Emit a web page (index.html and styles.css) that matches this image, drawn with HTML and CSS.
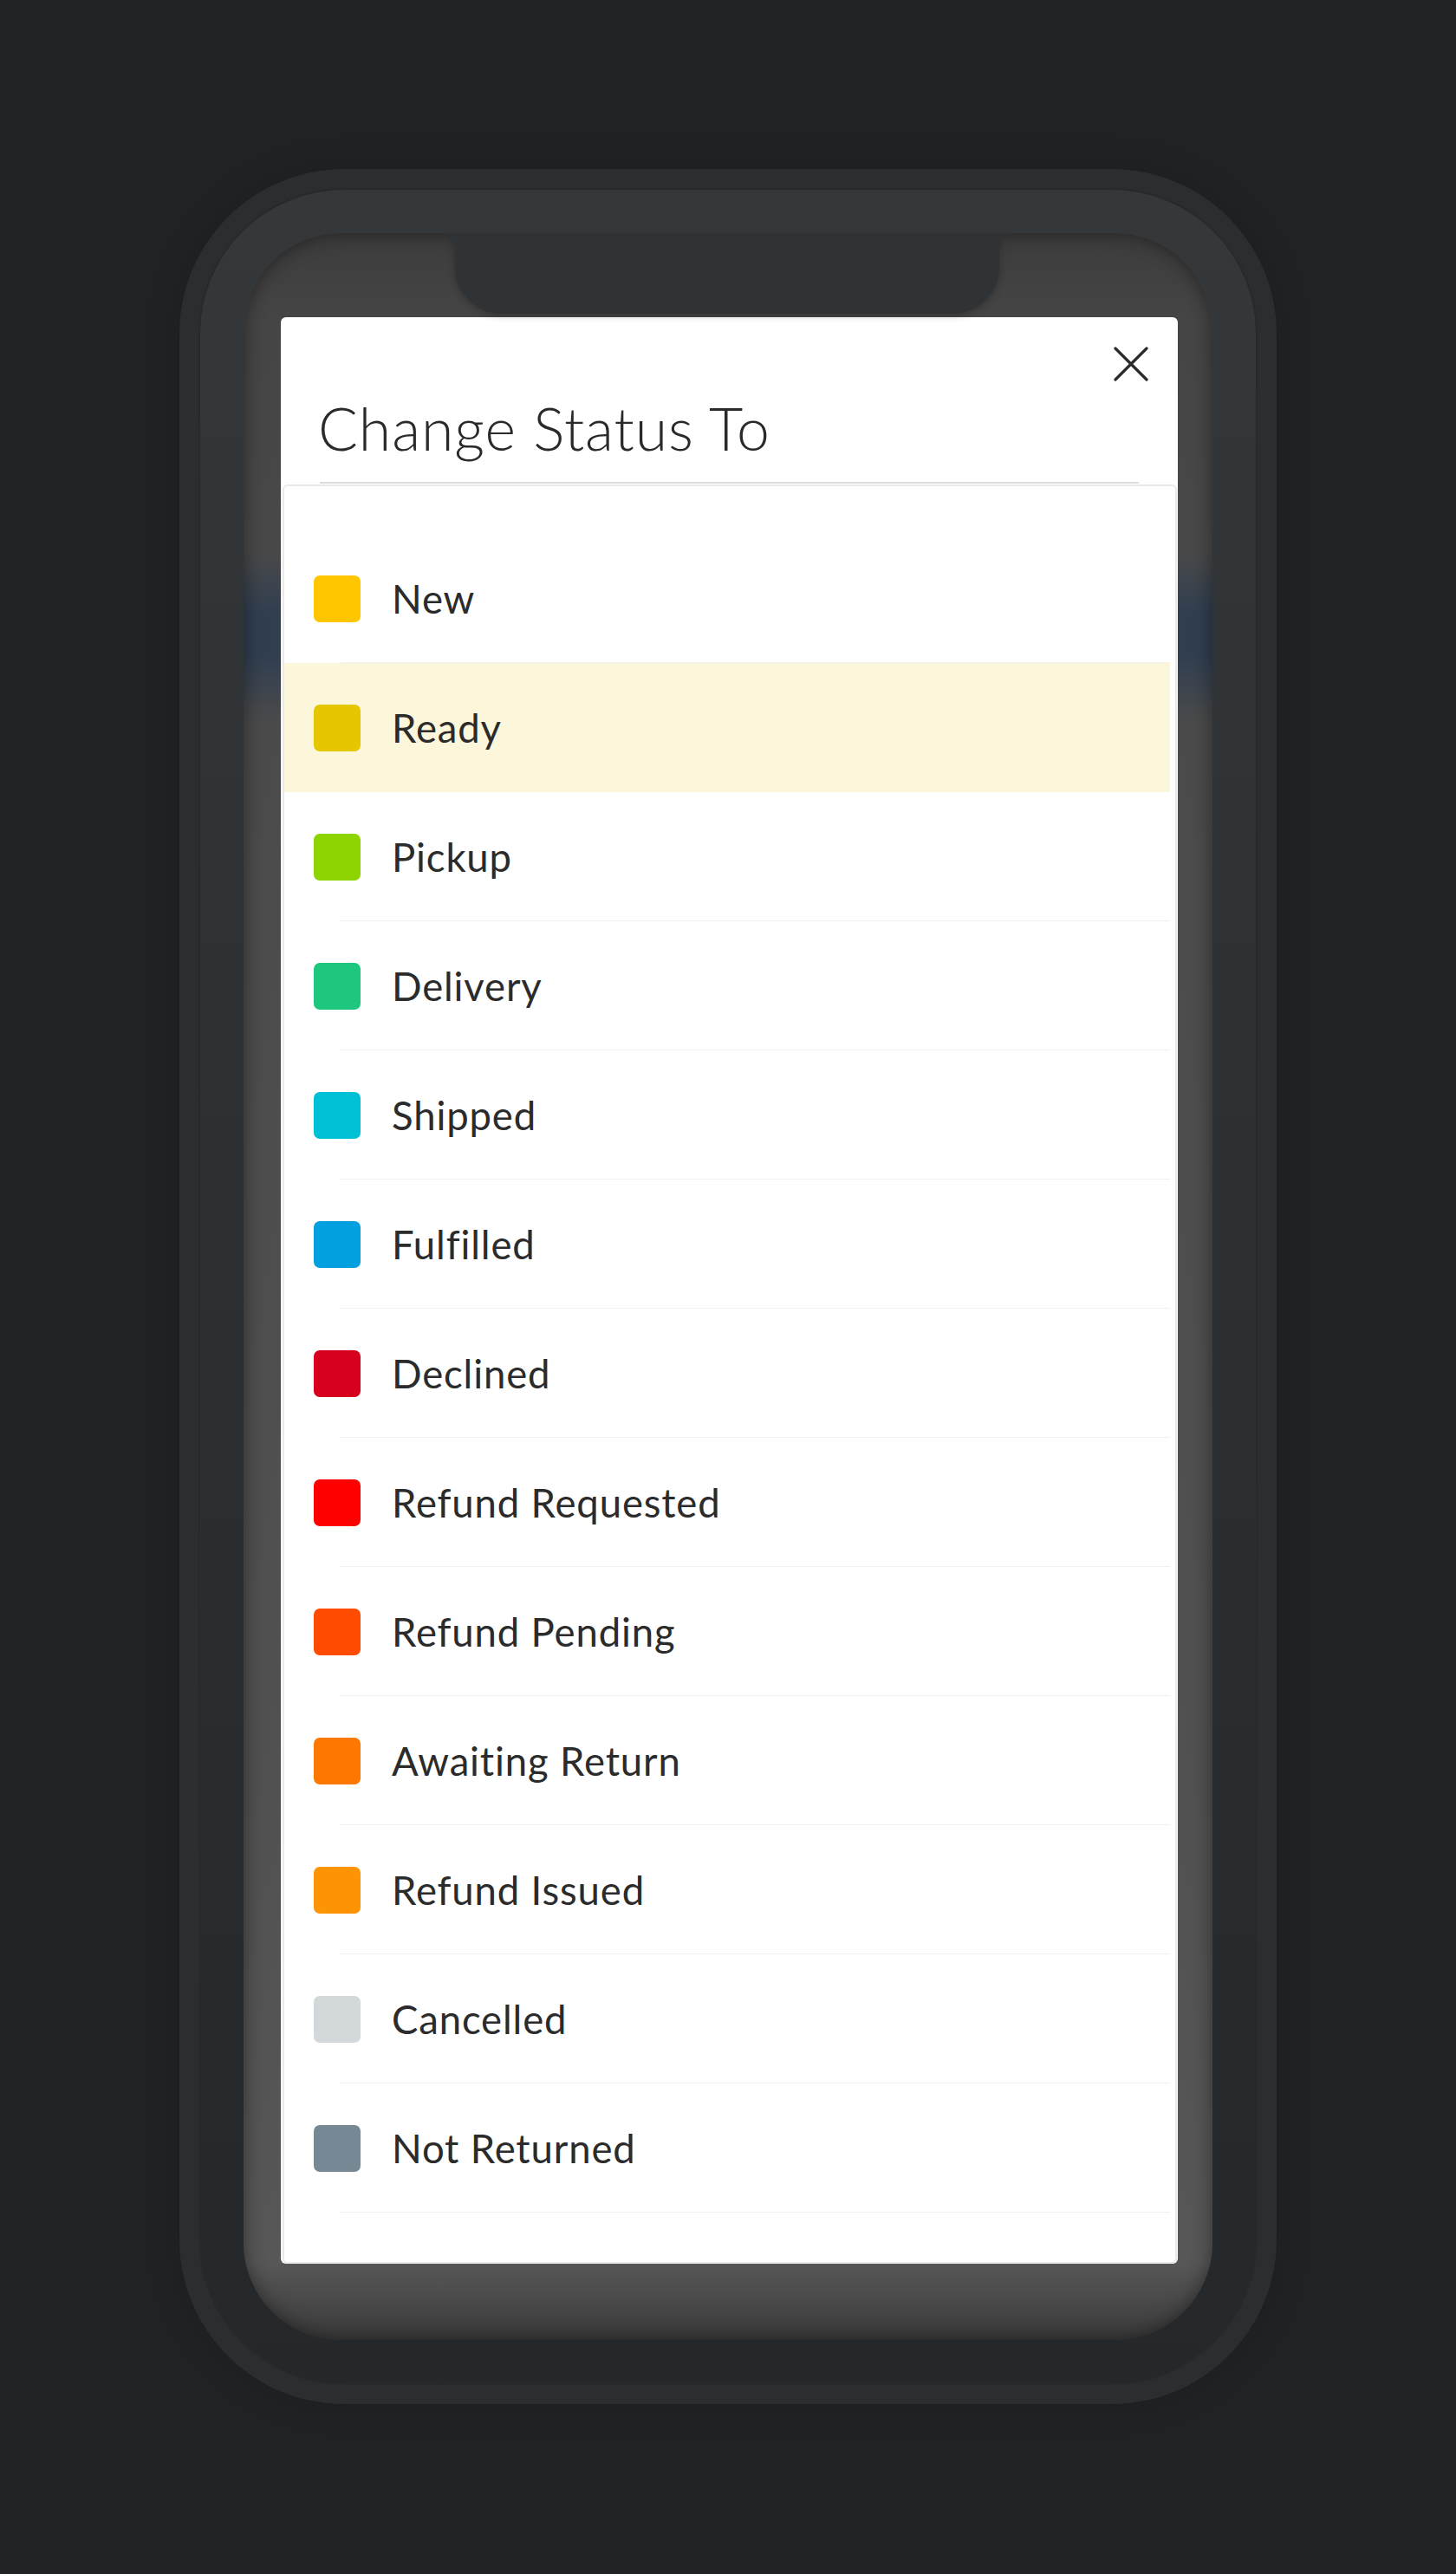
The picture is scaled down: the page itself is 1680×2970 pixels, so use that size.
FILE: index.html
```html
<!DOCTYPE html>
<html lang="en">
<head>
<meta charset="utf-8">
<title>Change Status To</title>
<link rel="stylesheet" href="styles.css">
</head>
<body>
<div class="phone">
  <div class="frame">
    <div class="screen">
      <div class="notch"></div>
      <div class="modal">
        <div class="modal-head">
          <button class="close" aria-label="Close">
            <svg width="40" height="40" viewBox="0 0 40 40"><path d="M2 2 L38 38 M38 2 L2 38" stroke="#2b2b2b" stroke-width="3.2" stroke-linecap="round" fill="none"/></svg>
          </button>
          <h1 class="title">Change Status To</h1>
          <div class="divider"></div>
        </div>
        <ul class="card">
          <li class="row"><span class="swatch" style="background:#ffc600"></span><span class="label">New</span></li>
          <li class="row row-active"><span class="swatch" style="background:#e6c600"></span><span class="label">Ready</span></li>
          <li class="row"><span class="swatch" style="background:#8dd400"></span><span class="label">Pickup</span></li>
          <li class="row"><span class="swatch" style="background:#1dc87e"></span><span class="label">Delivery</span></li>
          <li class="row"><span class="swatch" style="background:#00c0d6"></span><span class="label">Shipped</span></li>
          <li class="row"><span class="swatch" style="background:#02a0df"></span><span class="label">Fulfilled</span></li>
          <li class="row"><span class="swatch" style="background:#d8001f"></span><span class="label">Declined</span></li>
          <li class="row"><span class="swatch" style="background:#fd0000"></span><span class="label">Refund Requested</span></li>
          <li class="row"><span class="swatch" style="background:#fe4b01"></span><span class="label">Refund Pending</span></li>
          <li class="row"><span class="swatch" style="background:#fe7701"></span><span class="label">Awaiting Return</span></li>
          <li class="row"><span class="swatch" style="background:#fc9404"></span><span class="label">Refund Issued</span></li>
          <li class="row"><span class="swatch" style="background:#d3d9db"></span><span class="label">Cancelled</span></li>
          <li class="row"><span class="swatch" style="background:#778895"></span><span class="label">Not Returned</span></li>
        </ul>
      </div>
    </div>
  </div>
</div>
</body>
</html>
```
FILE: styles.css
```css
* { box-sizing: border-box; }
html, body { margin: 0; padding: 0; }
body {
  background: #202326;
  min-height: 2970px;
  font-family: Lato, "Noto Sans", sans-serif;
  padding-top: 195px;
}
.phone {
  width: 1266px;
  height: 2579px;
  margin: 0 auto;
  padding: 24px;
  border-radius: 190px;
  background: #2a2e31;
  box-shadow: 0 0 40px rgba(0,0,0,0.15);
}
.frame {
  height: 100%;
  padding: 50px;
  border-radius: 166px;
  background: linear-gradient(180deg, #34383b 0%, #2c3033 45%, #24282b 100%);
  box-shadow: 0 0 3px rgba(0,0,0,0.35);
}
.screen {
  position: relative;
  height: 100%;
  border-radius: 112px;
  overflow: hidden;
  padding: 97px 0 0 43px;
  background:
    linear-gradient(180deg, rgba(44,60,82,0) 370px, rgba(44,60,82,0.85) 440px, rgba(44,60,82,0.85) 485px, rgba(44,60,82,0) 565px),
    linear-gradient(180deg, #3c3c3c 0px, #454545 100px, #4b4b4b 600px, #515151 1800px, #575757 2343px, #3a3a3a 2431px);
  box-shadow: inset 0 0 22px rgba(0,0,0,0.45);
}
.notch {
  position: absolute;
  top: 0;
  left: 244px;
  width: 628px;
  height: 93px;
  background: #2f3336;
  border-radius: 0 0 54px 54px;
  box-shadow: 0 2px 8px rgba(0,0,0,0.25);
}
.notch::before, .notch::after {
  content: "";
  position: absolute;
  top: 0;
  width: 16px;
  height: 16px;
}
.notch::before {
  left: -16px;
  background: radial-gradient(circle at 0 100%, rgba(0,0,0,0) 15.5px, #2f3336 16px);
}
.notch::after {
  right: -16px;
  background: radial-gradient(circle at 100% 100%, rgba(0,0,0,0) 15.5px, #2f3336 16px);
}
.modal {
  width: 1035px;
  background: #fff;
  border-radius: 6px;
  display: flex;
  flex-direction: column;
}
.modal-head {
  display: flex;
  flex-direction: column;
  padding: 34px 34px 0 45px;
}
.close {
  align-self: flex-end;
  width: 40px;
  height: 40px;
  padding: 0;
  border: 0;
  background: none;
  display: block;
}
.close svg { display: block; }
.title {
  margin: 13px 0 0 -2px;
  font-size: 68px;
  line-height: 82px;
  font-weight: 300;
  color: #2a2a2a;
  letter-spacing: 0.9px;
}
.divider {
  height: 2px;
  margin: 21px 11px 0 0;
  background: #dcdcdc;
}
.card {
  list-style: none;
  margin: 1px 1px 0 2px;
  padding: 55px 6px 57px 0;
  border: 2px solid #eaeaea;
  border-radius: 6px;
}
.row {
  height: 149px;
  display: flex;
  align-items: center;
  padding-left: 34px;
  background: linear-gradient(#f1f1f1, #f1f1f1) no-repeat 65px 100% / calc(100% - 65px) 1px;
}
.row-active {
  background: #fcf6da;
}
.swatch {
  width: 54px;
  height: 54px;
  border-radius: 7px;
  flex: none;
}
.label {
  margin-left: 36px;
  font-size: 45.5px;
  letter-spacing: 0.85px;
  color: #2b2b2b;
}
```
